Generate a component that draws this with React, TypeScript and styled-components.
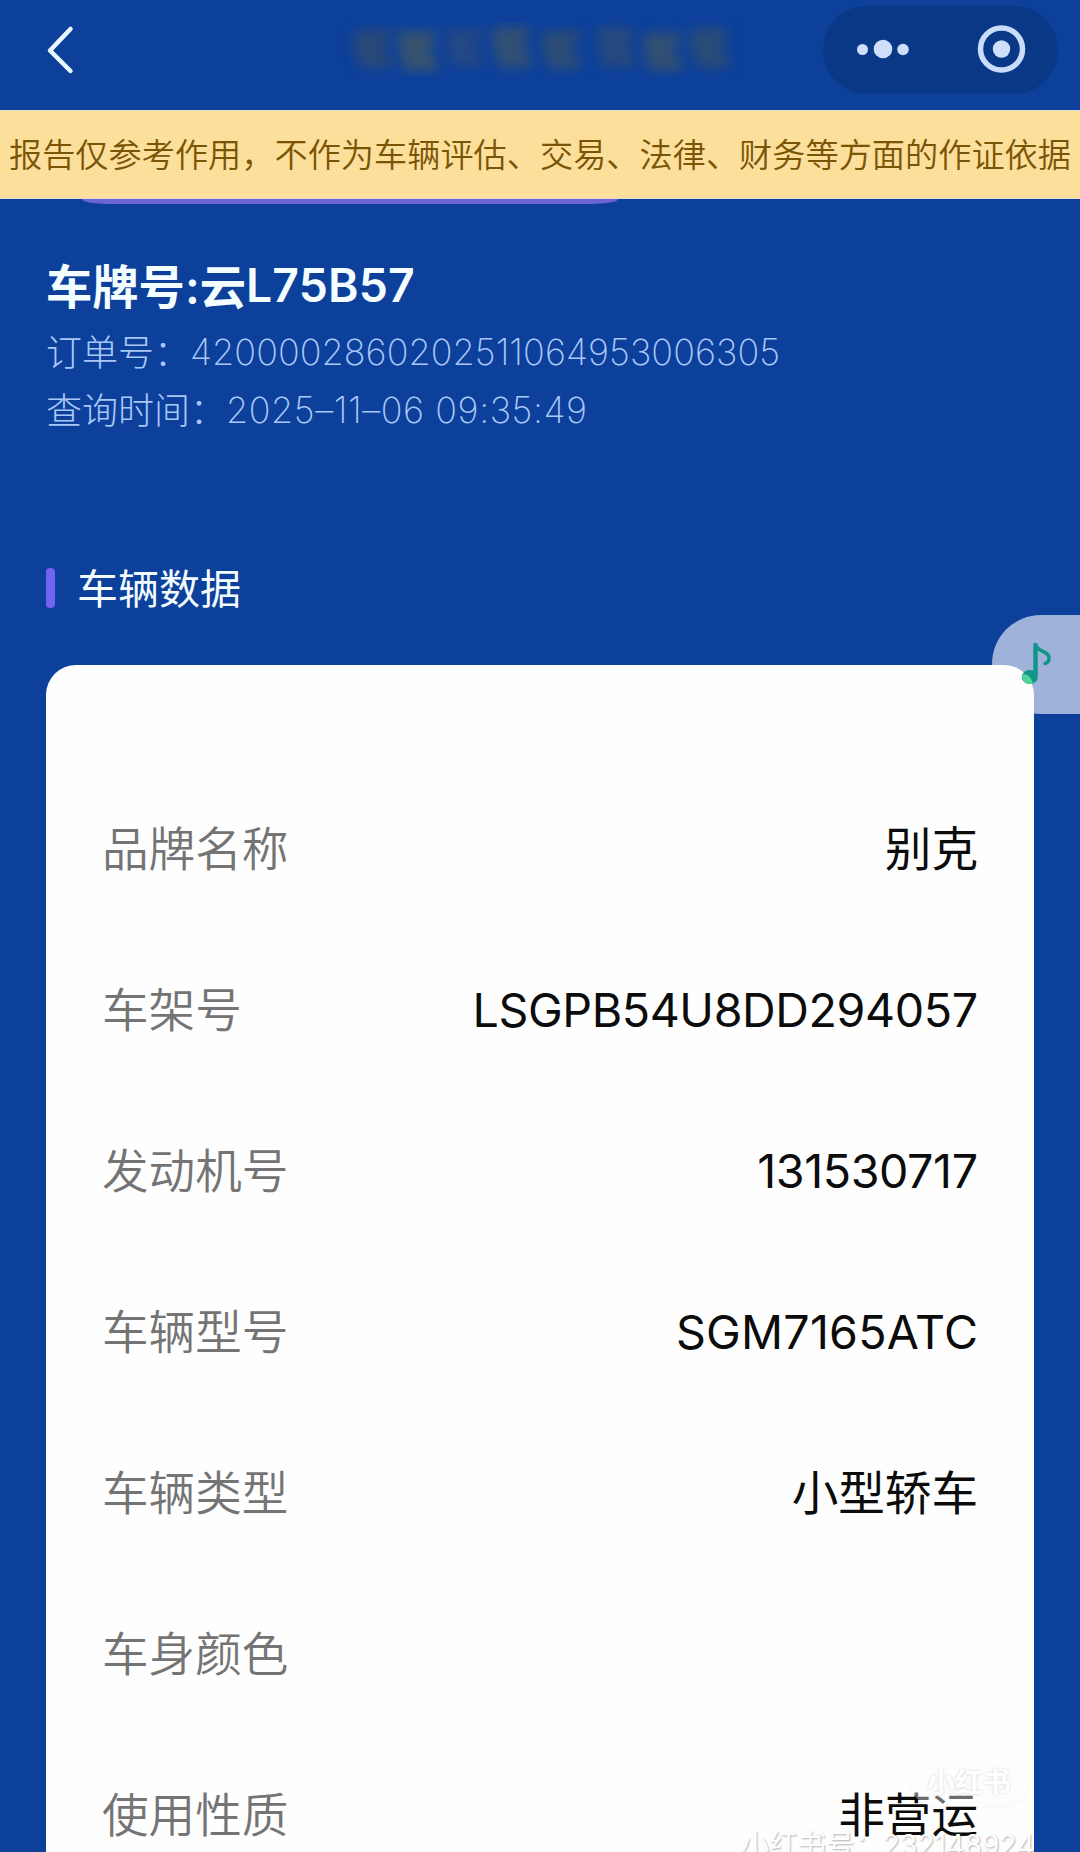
import React from "react";
import styled, { createGlobalStyle } from "styled-components";

const Global = createGlobalStyle`
  * { box-sizing: border-box; }
  body { margin: 0; background: #0d409b; }
`;

const sans = `Inter, "Noto Sans CJK SC", sans-serif`;

const Page = styled.div`
  position: relative;
  width: 1080px;
  height: 1852px;
  overflow: hidden;
  display: flex;
  flex-direction: column;
  background: #0d409b;
  font-family: ${sans};
`;

const Header = styled.header`
  flex: none;
  height: 110px;
  padding: 0 22px 0 45px;
  display: flex;
  align-items: flex-start;
  justify-content: space-between;
`;

const BackIcon = styled.svg`
  width: 30px;
  height: 52px;
  margin-top: 24px;
`;

const Smudge = styled.svg`
  width: 400px;
  height: 70px;
  margin: 15px 0 0 188px;
`;

const Capsule = styled.div`
  width: 235px;
  height: 88px;
  margin-top: 6px;
  border-radius: 44px;
  background: #083886;
  display: flex;
`;

const CapsuleIcon = styled.svg`
  width: 235px;
  height: 88px;
`;

const Notice = styled.div`
  flex: none;
  height: 89px;
  padding: 0 0 3px 9px;
  display: flex;
  align-items: center;
  background: #fddf9c;
  border-top: 1px solid #e6dfcf;
  border-bottom: 1px solid #ead9cf;
  color: #7a5506;
  font: 350 33.2px/1 "Noto Sans CJK SC", sans-serif;
  white-space: nowrap;
`;

const TabEdge = styled.div`
  flex: none;
  width: 536px;
  height: 5px;
  margin-left: 82px;
  border-radius: 0 0 26px 26px / 0 0 5px 5px;
  background: #6c63d6;
`;

const Summary = styled.section`
  flex: none;
  height: 346px;
  padding: 43px 46px 0;
`;

const Plate = styled.h1`
  margin: 0;
  height: 76px;
  display: flex;
  align-items: center;
  color: #f4fdff;
  font-size: 46.3px;
  font-weight: 600;
  white-space: nowrap;
`;

const PlateLabel = styled.span`
  padding-bottom: 4px;
`;

const Meta = styled.div`
  height: 58px;
  display: flex;
  align-items: center;
  color: #a9c8f8;
  font-size: 36px;
  font-weight: 250;
  white-space: nowrap;
`;

const MetaLabel = styled.span`
  padding-bottom: 4px;
`;

const Latin = styled.span<{ $spacing: number }>`
  letter-spacing: ${(p) => p.$spacing}px;
`;

const SectionTitle = styled.h2`
  flex: none;
  margin: 0;
  height: 75px;
  padding-left: 46px;
  display: flex;
  align-items: center;
  gap: 22px;
  color: #f2fcff;
  font-size: 41px;
  font-weight: 400;
`;

const SectionText = styled.span`
  padding-bottom: 3px;
`;

const Accent = styled.i`
  width: 9px;
  height: 40px;
  border-radius: 4px;
  background: #7263f0;
`;

const Card = styled.main`
  position: relative;
  z-index: 1;
  flex: none;
  width: 988px;
  height: 1300px;
  margin: 40px 0 0 46px;
  padding: 103px 56px 0;
  border-radius: 30px;
  background: #fefefe;
`;

const Row = styled.div`
  height: 161px;
  display: flex;
  align-items: center;
  justify-content: space-between;
  font-size: 46.6px;
  white-space: nowrap;
`;

const Label = styled.span`
  padding-bottom: 7px;
  color: #747474;
  font-weight: 350;
`;

const Value = styled.span<{ $latin: boolean; $spacing: number }>`
  padding-bottom: ${(p) => (p.$latin ? 0 : 6)}px;
  color: #0c0c0c;
  font-weight: 400;
  letter-spacing: ${(p) => p.$spacing}px;
  margin-right: ${(p) => -p.$spacing}px;
`;

const MusicTab = styled.div`
  position: absolute;
  top: 615px;
  right: 0;
  width: 88px;
  height: 99px;
  border-radius: 49px 0 0 49px;
  background: #9fb3da;
`;

const MusicNote = styled.svg`
  position: absolute;
  z-index: 2;
  top: 639px;
  left: 1017px;
  width: 40px;
  height: 50px;
`;

const BrandMark = styled.div`
  position: absolute;
  z-index: 2;
  top: 1756px;
  left: 910px;
  width: 118px;
  height: 50px;
  border-radius: 25px;
  display: flex;
  align-items: center;
  justify-content: center;
  background: rgba(253, 253, 253, 0.4);
  box-shadow: 0 1px 5px rgba(0, 0, 0, 0.04);
  color: #fff;
  font: 700 28px/1 "Noto Sans CJK SC", sans-serif;
  text-shadow: 0 0 3px rgba(0, 0, 0, 0.17);
`;

const AccountMark = styled.div`
  position: absolute;
  z-index: 2;
  top: 1828px;
  left: 741px;
  color: #fff;
  font: 400 28.3px/34px Inter, "Noto Sans CJK SC", sans-serif;
  white-space: nowrap;
  text-shadow: 1px 1px 2px rgba(0, 0, 0, 0.3);
`;

const blots = [
  [30, 33, "#2f4b72"], [74, 36, "#3c5668"], [122, 32, "#254a82"], [168, 32, "#38536c"],
  [218, 34, "#30506f"], [272, 32, "#2b4c78"], [320, 36, "#38526c"], [366, 33, "#2f4d72"],
] as const;

const rows = [
  { label: "品牌名称", value: "别克", latin: false, spacing: 0 },
  { label: "车架号", value: "LSGPB54U8DD294057", latin: true, spacing: -0.4 },
  { label: "发动机号", value: "131530717", latin: true, spacing: -0.4 },
  { label: "车辆型号", value: "SGM7165ATC", latin: true, spacing: 0.2 },
  { label: "车辆类型", value: "小型轿车", latin: false, spacing: 0 },
  { label: "车身颜色", value: "", latin: false, spacing: 0 },
  { label: "使用性质", value: "非营运", latin: false, spacing: 0 },
];

export default function App() {
  return (
    <Page>
      <Global />
      <Header>
        <BackIcon viewBox="0 0 30 52" fill="none" stroke="#eaf8ff" strokeWidth="4.5" strokeLinecap="round" strokeLinejoin="round">
          <path d="M25.500 5 5 26.500 25.500 47" />
        </BackIcon>
        <Smudge viewBox="0 0 400 70">
          <filter id="soft"><feGaussianBlur stdDeviation="6" /></filter>
          <g filter="url(#soft)" opacity="0.85">
            {blots.map(([x, y, c], i) => (
              <path
                key={x}
                d={
                  i % 2
                    ? `M${x - 18} ${y - 20}h36v16h-6v8h8v16h-34v-14h-4z`
                    : `M${x - 19} ${y - 18}h38v12h-8v12h8v14h-34v-14h-4z`
                }
                fill={c}
              />
            ))}
          </g>
        </Smudge>
        <Capsule>
          <CapsuleIcon viewBox="0 0 235 88">
            <g fill="#cfdffb">
              <circle cx="39.500" cy="43.500" r="5.500" />
              <circle cx="60" cy="43" r="9.300" />
              <circle cx="80" cy="43.500" r="5.800" />
              <circle cx="178.500" cy="43" r="8.700" />
            </g>
            <circle cx="178.500" cy="43" r="21" fill="none" stroke="#c9dcfc" strokeWidth="5.500" />
            <path d="M117 24v40" stroke="#0b3c8c" strokeWidth="1.500" />
          </CapsuleIcon>
        </Capsule>
      </Header>
      <Notice>报告仅参考作用，不作为车辆评估、交易、法律、财务等方面的作证依据</Notice>
      <TabEdge />
      <Summary>
        <Plate><PlateLabel>车牌号:云</PlateLabel><Latin $spacing={0.2}>L75B57</Latin></Plate>
        <Meta><MetaLabel>订单号：</MetaLabel><Latin $spacing={0.05}>4200002860202511064953006305</Latin></Meta>
        <Meta><MetaLabel>查询时间：</MetaLabel><Latin $spacing={0.55}>2025–11–06 09:35:49</Latin></Meta>
      </Summary>
      <SectionTitle><Accent /><SectionText>车辆数据</SectionText></SectionTitle>
      <Card>
        {rows.map((r) => (
          <Row key={r.label}>
            <Label>{r.label}</Label>
            <Value $latin={r.latin} $spacing={r.spacing}>{r.value}</Value>
          </Row>
        ))}
      </Card>
      <MusicTab />
      <MusicNote viewBox="0 0 40 50">
        <path d="M18.500 6v30" stroke="#11958a" strokeWidth="4.500" strokeLinecap="round" />
        <path d="M18.500 6c2 7 14 6 13.500 13 0 3-2 5-4 5.500" fill="none" stroke="#11958a" strokeWidth="3.500" strokeLinecap="round" />
        <ellipse cx="12.800" cy="38" rx="8" ry="7" fill="#11958a" />
        <path d="M5.500 35c6 0 9 4 10.500 9.500-6 2-12-2-10.500-9.500z" fill="#4fd39a" />
      </MusicNote>
      <BrandMark>小红书</BrandMark>
      <AccountMark>小红书号：232148924</AccountMark>
    </Page>
  );
}
